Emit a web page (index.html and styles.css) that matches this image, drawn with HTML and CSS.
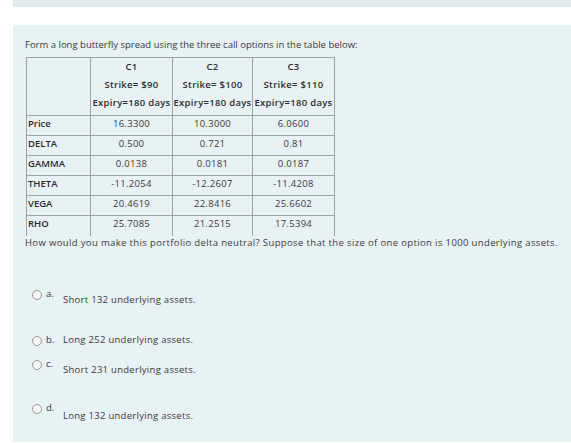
FILE: index.html
```html
<!DOCTYPE html>
<html>
<head>
<meta charset="utf-8">
<link rel="stylesheet" href="styles.css">
</head>
<body>
<div class="topbar"></div>
<div class="panel">
  <p class="intro">Form a long butterfly spread using the three call options in the table below:</p>
  <table class="greeks">
    <colgroup><col class="c0"><col class="c1"><col class="c2"><col class="c3"></colgroup>
    <tr class="head">
      <th></th>
      <th><div>C1</div><div>Strike= $90</div><div>Expiry=180 days</div></th>
      <th><div>C2</div><div>Strike= $100</div><div>Expiry=180 days</div></th>
      <th><div>C3</div><div>Strike= $110</div><div>Expiry=180 days</div></th>
    </tr>
    <tr><td class="lbl">Price</td><td>16.3300</td><td>10.3000</td><td>6.0600</td></tr>
    <tr><td class="lbl">DELTA</td><td>0.500</td><td>0.721</td><td>0.81</td></tr>
    <tr><td class="lbl">GAMMA</td><td>0.0138</td><td>0.0181</td><td>0.0187</td></tr>
    <tr><td class="lbl">THETA</td><td>-11.2054</td><td>-12.2607</td><td>-11.4208</td></tr>
    <tr><td class="lbl">VEGA</td><td>20.4619</td><td>22.8416</td><td>25.6602</td></tr>
    <tr class="last"><td class="lbl">RHO</td><td>25.7085</td><td>21.2515</td><td>17.5394</td></tr>
  </table>
  <p class="question">How would you make this portfolio delta neutral? Suppose that the size of one option is 1000 underlying assets.</p>
  <div class="answers">
    <div class="opt opt-a"><span class="radio"></span><span class="letter">a.</span><span class="txt low">Short 132 underlying assets.</span></div>
    <div class="opt opt-b"><span class="radio"></span><span class="letter">b.</span><span class="txt">Long 252 underlying assets.</span></div>
    <div class="opt opt-c"><span class="radio"></span><span class="letter">c.</span><span class="txt low">Short 231 underlying assets.</span></div>
    <div class="opt opt-d"><span class="radio"></span><span class="letter">d.</span><span class="txt lower">Long 132 underlying assets.</span></div>
  </div>
</div>
</body>
</html>
```
FILE: styles.css
```css
html, body {
  margin: 0;
  padding: 0;
  background: #ffffff;
  height: 100%;
}
body {
  font-family: "Open Sans", "DejaVu Sans", sans-serif;
  color: #3a3a3a;
  font-size: 9.5px;
}
.topbar {
  margin-left: 13px;
  height: 7px;
  background: #e3ecef;
}
.panel {
  margin: 18px 0 0 13px;
  background: #e8f1f4;
  height: 417px;
  padding: 14px 0 0 12px;
  box-sizing: border-box;
}
.intro {
  margin: 0;
  line-height: 12px;
}
.greeks {
  border-collapse: collapse;
  margin: 6px 0 0 1px;
  table-layout: fixed;
  width: 309px;
  letter-spacing: 0.3px;
}
.c0 { width: 64px; }
.c1 { width: 82px; }
.c2 { width: 80px; }
.c3 { width: 82px; }
.greeks th, .greeks td {
  border: 1px solid #9fa3a5;
  padding: 0;
  text-align: center;
  font-weight: normal;
}
.greeks th {
  font-weight: 600;
  color: #2c2c2c;
  padding: 0 0 3px;
  height: 54px;
}
.greeks th div {
  line-height: 18px;
}
.greeks td {
  height: 15px;
  line-height: 15px;
  vertical-align: top;
  padding: 0 0 4px;
}
.greeks td.lbl {
  text-align: left;
  font-weight: 600;
  color: #2c2c2c;
  padding-left: 1px;
  letter-spacing: 0;
}
.greeks tr.last td {
  border-bottom: none;
  padding-bottom: 5px;
}
.question {
  margin: 1px 0 0;
  line-height: 12px;
  letter-spacing: 0.36px;
}
.answers {
  padding-left: 7px;
}
.opt {
  display: flex;
  align-items: flex-start;
}
.radio {
  width: 8px;
  height: 8px;
  border: 1px solid #9a9a9a;
  border-radius: 50%;
  background: #f7f7f7;
  margin-top: 1px;
  flex: none;
}
.letter {
  margin-left: 4px;
  width: 17px;
  line-height: 10px;
}
.txt {
  line-height: 10px;
  letter-spacing: 0.28px;
}
.txt.low { padding-top: 6px; }
.txt.lower { padding-top: 8px; }
.opt-a { margin-top: 40px; }
.opt-b { margin-top: 30px; }
.opt-c { margin-top: 13px; }
.opt-d { margin-top: 28px; }
```
